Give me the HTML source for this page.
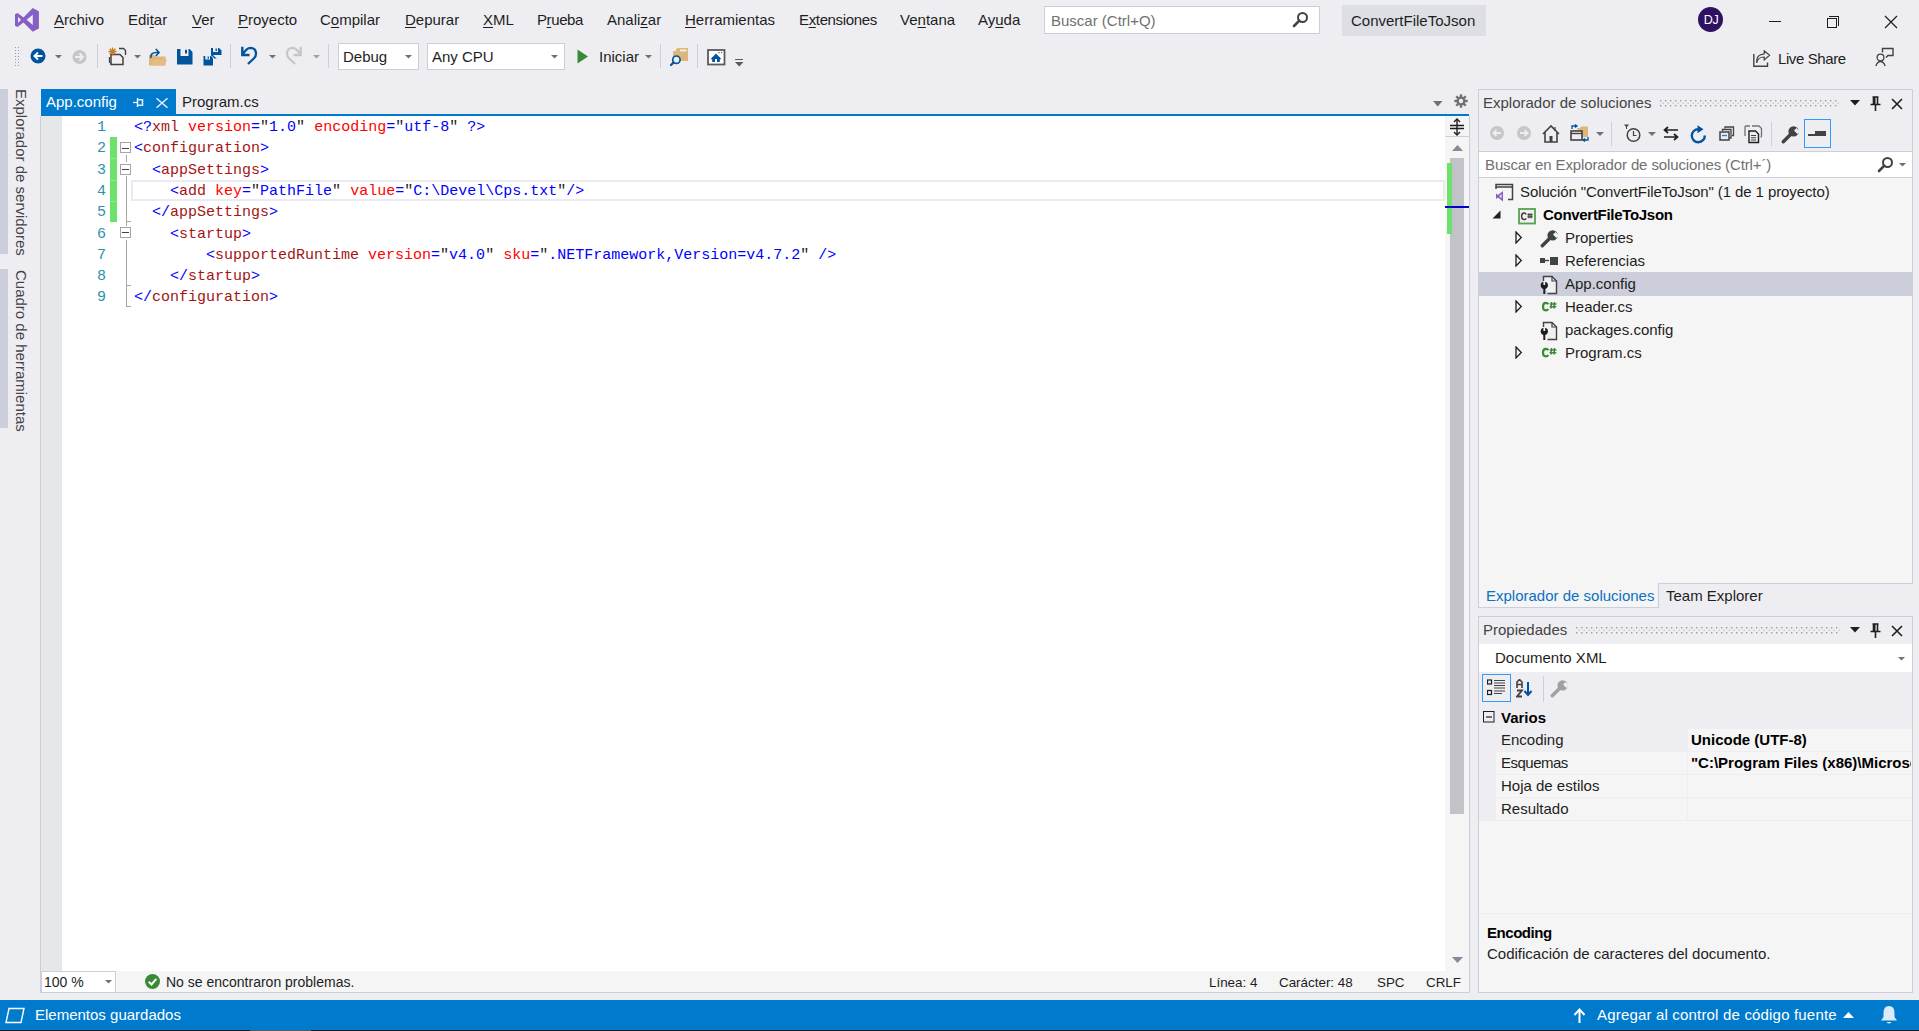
<!DOCTYPE html>
<html><head><meta charset="utf-8">
<style>
*{margin:0;padding:0;box-sizing:border-box}
html,body{width:1919px;height:1031px;overflow:hidden;background:#EEEEF2;font-family:"Liberation Sans",sans-serif;color:#1E1E1E}
.a{position:absolute}
.t{position:absolute;white-space:pre;font-size:15px;line-height:18px}
.u{text-decoration:underline;text-underline-offset:2px}
.sep{position:absolute;width:1px;background:#CCCEDB}
.code{position:absolute;font-family:"Liberation Mono",monospace;font-size:15px;white-space:pre;line-height:21px}
.ln{position:absolute;font-family:"Liberation Mono",monospace;font-size:15px;color:#2B91AF;width:30px;text-align:right;left:76px;line-height:21px}
.d{color:#0000FF}.n{color:#A31515}.at{color:#FF0000}.v{color:#0000FF}
</style></head><body>

<!-- ===== MENU BAR ===== -->
<svg class="a" style="left:0;top:0" width="48" height="36" viewBox="0 0 48 36"><path fill="#865FC5" fill-rule="evenodd" d="M32.7 8 L38.9 11.3 V28.5 L32.7 31.8 L23.5 22.6 L17.6 27 L15 25.7 V14.2 L17.6 13 L23.5 17.4 Z M32.8 14.7 V25.1 L26.6 19.8 Z M18.1 16.7 V23.1 L21 19.8 Z"/></svg>
<div class="t" style="left:54px;top:11px"><span class="u">A</span>rchivo</div>
<div class="t" style="left:128px;top:11px">Edi<span class="u">t</span>ar</div>
<div class="t" style="left:192px;top:11px"><span class="u">V</span>er</div>
<div class="t" style="left:238px;top:11px"><span class="u">P</span>royecto</div>
<div class="t" style="left:320px;top:11px">C<span class="u">o</span>mpilar</div>
<div class="t" style="left:405px;top:11px"><span class="u">D</span>epurar</div>
<div class="t" style="left:483px;top:11px"><span class="u">X</span>ML</div>
<div class="t" style="left:537px;top:11px;letter-spacing:-0.4px">P<span class="u">r</span>ueba</div>
<div class="t" style="left:607px;top:11px">Anali<span class="u">z</span>ar</div>
<div class="t" style="left:685px;top:11px"><span class="u">H</span>erramientas</div>
<div class="t" style="left:799px;top:11px;letter-spacing:-0.35px">E<span class="u">x</span>tensiones</div>
<div class="t" style="left:900px;top:11px">Ve<span class="u">n</span>tana</div>
<div class="t" style="left:978px;top:11px">Ay<span class="u">u</span>da</div>

<!-- search box -->
<div class="a" style="left:1044px;top:6px;width:276px;height:28px;background:#fff;border:1px solid #CCCEDB"></div>
<div class="t" style="left:1051px;top:12px;color:#717171">Buscar (Ctrl+Q)</div>
<svg class="a" style="left:1292px;top:11px" width="17" height="17" viewBox="0 0 17 17"><circle cx="10.5" cy="6.5" r="4.5" fill="none" stroke="#424242" stroke-width="2"/><path d="M7.3 9.7 L2 15" stroke="#424242" stroke-width="2.6" stroke-linecap="round"/></svg>
<div class="a" style="left:1342px;top:5px;width:144px;height:31px;background:#DDDFE4"></div>
<div class="t" style="left:1351px;top:12px">ConvertFileToJson</div>
<!-- user -->
<div class="a" style="left:1698px;top:7px;width:25px;height:25px;border-radius:50%;background:#2E1160"></div>
<div class="t" style="left:1701px;top:12px;width:20px;text-align:center;color:#fff;font-size:12.5px;line-height:17px;letter-spacing:-0.3px">DJ</div>
<!-- window buttons -->
<div class="a" style="left:1769px;top:21px;width:12px;height:1px;background:#1E1E1E"></div>
<div class="a" style="left:1827px;top:18px;width:10px;height:10px;border:1px solid #1E1E1E"></div>
<div class="a" style="left:1829px;top:16px;width:10px;height:10px;border-top:1px solid #1E1E1E;border-right:1px solid #1E1E1E"></div>
<svg class="a" style="left:1884px;top:15px" width="14" height="14" viewBox="0 0 14 14"><path d="M1 1 L13 13 M13 1 L1 13" stroke="#1E1E1E" stroke-width="1.2"/></svg>

<!-- ===== TOOLBAR ===== -->
<div class="a" style="left:14px;top:46px;width:6px;height:22px;background-image:radial-gradient(#999 0.8px,transparent 0.9px);background-size:3px 3px"></div>
<svg class="a" style="left:30px;top:48px" width="17" height="17" viewBox="0 0 17 17"><circle cx="8" cy="8" r="7.5" fill="#00539C"/><path d="M12.5 8 H5 M8 4.5 L4.5 8 L8 11.5" stroke="#fff" stroke-width="2" fill="none"/></svg>
<svg class="a" style="left:55px;top:55px" width="8" height="4"><path d="M0 0 H7 L3.5 3.5Z" fill="#717171"/></svg>
<svg class="a" style="left:71px;top:49px" width="17" height="17" viewBox="0 0 17 17"><circle cx="8.5" cy="8" r="7" fill="#C6C6C6"/><path d="M4 8 H11.5 M8.5 4.5 L12 8 L8.5 11.5" stroke="#EEEEF2" stroke-width="2" fill="none"/></svg>
<div class="sep" style="left:97px;top:44px;height:24px"></div>
<svg class="a" style="left:107px;top:46px" width="20" height="20" viewBox="0 0 20 20"><path d="M12 2.5 H16.5 L18.5 4.5 V9" fill="none" stroke="#424242" stroke-width="1.4"/><path d="M4 8.5 H13 L16 11.5 V18.5 H4Z" fill="#F0EFF1" stroke="#424242" stroke-width="1.5"/><path d="M2.5 11 V16 L4 17.5" fill="none" stroke="#424242" stroke-width="1.3"/><g stroke="#C27D1A" stroke-width="1.3"><path d="M5.5 1.5 V9.5 M1.5 5.5 H9.5 M2.7 2.7 L8.3 8.3 M8.3 2.7 L2.7 8.3"/></g></svg>
<svg class="a" style="left:134px;top:55px" width="8" height="4"><path d="M0 0 H7 L3.5 3.5Z" fill="#717171"/></svg>
<svg class="a" style="left:148px;top:47px" width="20" height="20" viewBox="0 0 20 20"><path d="M1 8 H6 L7.5 9.5 H17.5 V18.5 H1Z" fill="#DCB67A"/><path d="M2.5 18.5 L5 12.5 H19 L16.5 18.5Z" fill="#E2BE83"/><path d="M3 11 Q2 5.5 8.5 5.5 H10.5" fill="none" stroke="#00539C" stroke-width="1.7"/><path d="M7.8 2 L11 5.5 L7.8 9" fill="none" stroke="#00539C" stroke-width="1.7"/></svg>
<svg class="a" style="left:177px;top:49px" width="16" height="16" viewBox="0 0 16 16"><path d="M0 0 H12.5 L15.5 3 V15.5 H0Z" fill="#00539C"/><rect x="3.5" y="0" width="8" height="7" fill="#EEEEF2"/><rect x="8" y="0.8" width="2" height="3.7" fill="#00539C"/></svg>
<svg class="a" style="left:203px;top:47px" width="19" height="19" viewBox="0 0 19 19"><path d="M8 1 H16 L18.5 3.5 V11.5 H8Z" fill="#00539C"/><rect x="10" y="1" width="5" height="4" fill="#EEEEF2"/><rect x="12.5" y="1.5" width="1.4" height="2.5" fill="#00539C"/><path d="M10 8 H19 V13 H15" fill="#EEEEF2"/><path d="M0 8.5 H8 L10.5 11 V19 H0Z" fill="#00539C" stroke="#EEEEF2" stroke-width="1"/><rect x="2.3" y="9" width="4.7" height="3.5" fill="#EEEEF2"/><rect x="4.6" y="9.5" width="1.3" height="2.3" fill="#00539C"/></svg>
<div class="sep" style="left:230px;top:44px;height:24px"></div>
<svg class="a" style="left:240px;top:46px" width="18" height="19" viewBox="0 0 18 19"><path d="M2.3 0.8 V9 H9.5" fill="none" stroke="#00539C" stroke-width="2.4"/><path d="M3 8 Q6.5 1.8 10.5 1.8 Q16 2 16 7.8 Q16 10.3 14 12.3 L8 18" fill="none" stroke="#00539C" stroke-width="2.3"/></svg>
<svg class="a" style="left:269px;top:55px" width="8" height="4"><path d="M0 0 H7 L3.5 3.5Z" fill="#717171"/></svg>
<svg class="a" style="left:285px;top:46px" width="18" height="19" viewBox="0 0 18 19"><g transform="translate(18,0) scale(-1,1)"><path d="M2.3 0.8 V9 H9.5" fill="none" stroke="#C6C6C6" stroke-width="2.3"/><path d="M3 8 Q6.5 1.8 10.5 1.8 Q16 2 16 7.8 Q16 10.3 14 12.3 L8 18" fill="none" stroke="#C6C6C6" stroke-width="2.2"/></g></svg>
<svg class="a" style="left:313px;top:55px" width="8" height="4"><path d="M0 0 H7 L3.5 3.5Z" fill="#A0A0A0"/></svg>
<div class="sep" style="left:328px;top:44px;height:24px"></div>
<!-- combos -->
<div class="a" style="left:338px;top:43px;width:81px;height:27px;background:#fff;border:1px solid #CCCEDB"></div>
<div class="t" style="left:343px;top:48px">Debug</div>
<svg class="a" style="left:405px;top:55px" width="8" height="4"><path d="M0 0 H7 L3.5 3.5Z" fill="#717171"/></svg>
<div class="a" style="left:427px;top:43px;width:138px;height:27px;background:#fff;border:1px solid #CCCEDB"></div>
<div class="t" style="left:432px;top:48px">Any CPU</div>
<svg class="a" style="left:551px;top:55px" width="8" height="4"><path d="M0 0 H7 L3.5 3.5Z" fill="#717171"/></svg>
<svg class="a" style="left:577px;top:49px" width="12" height="15"><path d="M0.5 0.5 L11 7.5 L0.5 14.5Z" fill="#388A34"/></svg>
<div class="t" style="left:599px;top:48px">Iniciar</div>
<svg class="a" style="left:645px;top:55px" width="8" height="4"><path d="M0 0 H7 L3.5 3.5Z" fill="#717171"/></svg>
<div class="sep" style="left:660px;top:44px;height:24px"></div>
<svg class="a" style="left:660px;top:42px" width="40" height="30" viewBox="0 0 40 30"><path d="M13 9 H15.5 L17 6 H28 V19 H13Z" fill="#DCB67A"/><rect x="20" y="7.5" width="6.5" height="2" fill="#EEF0F0"/><circle cx="16.4" cy="17.7" r="3.7" fill="#EEEEF2" stroke="#00539C" stroke-width="1.7"/><path d="M13.7 20.4 L11 23" stroke="#00539C" stroke-width="2.2" stroke-linecap="round"/></svg>
<div class="sep" style="left:697px;top:44px;height:24px"></div>
<svg class="a" style="left:700px;top:42px" width="40" height="30" viewBox="0 0 40 30"><rect x="8" y="8" width="16.5" height="14.5" fill="#fff" stroke="#5A5A5A" stroke-width="1.8"/><path d="M10.5 17.2 L16 11.5 L21.5 17.2 Z" fill="#00539C"/><rect x="12.2" y="15" width="7.6" height="5" fill="#00539C"/><rect x="15" y="17" width="2" height="3" fill="#fff"/><rect x="18.5" y="10" width="1.2" height="1.2" fill="#5A5A5A"/><rect x="21" y="10" width="1.2" height="1.2" fill="#5A5A5A"/></svg>
<div class="a" style="left:735px;top:59px;width:8px;height:1px;background:#5A5A5A"></div>
<svg class="a" style="left:735px;top:62px" width="9" height="5"><path d="M0 0 H8.5 L4.25 4.5Z" fill="#5A5A5A"/></svg>
<!-- live share -->
<svg class="a" style="left:1752px;top:50px" width="19" height="18" viewBox="0 0 19 18"><path d="M1.8 4 V16.2 H15.5 V12.5" fill="none" stroke="#424242" stroke-width="1.4"/><path d="M4.8 13 Q5.5 7 12.2 7 V10 L17.6 5.2 L12.2 0.8 V3.8 Q3.8 4.5 4.8 13Z" fill="none" stroke="#424242" stroke-width="1.2"/></svg>
<div class="t" style="left:1778px;top:50px;letter-spacing:-0.4px">Live Share</div>
<svg class="a" style="left:1875px;top:47px" width="20" height="21" viewBox="0 0 20 21"><circle cx="5.5" cy="10.5" r="3.4" fill="none" stroke="#424242" stroke-width="1.3"/><path d="M0.8 19 Q2.5 14.5 5.5 14.5 Q8.5 14.5 10.2 19" fill="none" stroke="#424242" stroke-width="1.3"/><path d="M7.5 5.5 V1.5 H18 V8.5 H13 L11 10.5" fill="none" stroke="#424242" stroke-width="1.4"/></svg>

<!-- ===== LEFT VERTICAL TABS ===== -->
<div class="a" style="left:0;top:89px;width:8px;height:165px;background:#CCCEDB"></div>
<div class="a" style="left:0;top:269px;width:8px;height:159px;background:#CCCEDB"></div>
<div class="t" style="left:12px;top:89px;writing-mode:vertical-rl;color:#444">Explorador de servidores</div>
<div class="t" style="left:12px;top:270px;writing-mode:vertical-rl;color:#444">Cuadro de herramientas</div>

<!-- ===== DOCUMENT TABS ===== -->
<div class="a" style="left:41px;top:89px;width:135px;height:27px;background:#007ACC"></div>
<div class="t" style="left:46px;top:93px;color:#fff">App.config</div>
<svg class="a" style="left:133px;top:98px" width="11" height="10" viewBox="0 0 11 10"><path d="M0 4.5 H4" stroke="#fff" stroke-width="1.2"/><path d="M4.5 0 V9" stroke="#fff" stroke-width="1.4"/><path d="M4.5 1.8 H9.5 V7.2 H4.5" fill="none" stroke="#DDEBF7" stroke-width="1.6"/></svg>
<svg class="a" style="left:156px;top:98px" width="12" height="10" viewBox="0 0 12 10"><path d="M0.5 0.3 L11.5 9.7 M11.5 0.3 L0.5 9.7" stroke="#E6F0FA" stroke-width="1.5"/></svg>
<div class="t" style="left:182px;top:93px">Program.cs</div>
<div class="a" style="left:41px;top:114px;width:1428px;height:2px;background:#007ACC"></div>
<svg class="a" style="left:1433px;top:101px" width="10" height="6"><path d="M0 0 H9.5 L4.75 5.5Z" fill="#717171"/></svg>
<svg class="a" style="left:1454px;top:94px" width="14" height="14" viewBox="0 0 14 14"><g fill="#717171"><circle cx="7" cy="7" r="4.6"/><rect x="5.8" y="0.3" width="2.4" height="13.4"/><rect x="0.3" y="5.8" width="13.4" height="2.4"/><rect x="5.8" y="0.3" width="2.4" height="13.4" transform="rotate(45 7 7)"/><rect x="5.8" y="0.3" width="2.4" height="13.4" transform="rotate(-45 7 7)"/></g><circle cx="7" cy="7" r="2.2" fill="#EEEEF2"/></svg>

<!-- ===== EDITOR ===== -->
<div class="a" style="left:40px;top:116px;width:1430px;height:877px;border:1px solid #CCCEDB;border-top:none;background:#fff"></div>
<div class="a" style="left:41px;top:116px;width:21px;height:855px;background:#E6E7E8"></div>
<!-- current line -->
<div class="a" style="left:131px;top:180px;width:1314px;height:21px;border:2px solid #EAEAF2"></div>
<!-- green change bar -->
<div class="a" style="left:110px;top:137px;width:7px;height:85px;background:#6CE26C"></div>
<div class="a" style="left:110px;top:158px;width:7px;height:1px;background:#8CE88C"></div>
<div class="a" style="left:110px;top:180px;width:7px;height:1px;background:#8CE88C"></div>
<div class="a" style="left:110px;top:201px;width:7px;height:1px;background:#8CE88C"></div>
<!-- fold markers -->
<div class="a" style="left:126px;top:155px;width:1px;height:7px;background:#A5A5A5"></div>
<div class="a" style="left:126px;top:176px;width:1px;height:50px;background:#A5A5A5"></div>
<div class="a" style="left:126px;top:221px;width:5px;height:1px;background:#A5A5A5"></div>
<div class="a" style="left:126px;top:240px;width:1px;height:67px;background:#A5A5A5"></div>
<div class="a" style="left:126px;top:285px;width:5px;height:1px;background:#A5A5A5"></div>
<div class="a" style="left:126px;top:306px;width:5px;height:1px;background:#A5A5A5"></div>
<div class="a" style="left:120px;top:142px;width:11px;height:11px;border:1px solid #A5A5A5;background:#fff"></div>
<div class="a" style="left:122px;top:148px;width:7px;height:1px;background:#424242"></div>
<div class="a" style="left:120px;top:164px;width:11px;height:11px;border:1px solid #A5A5A5;background:#fff"></div>
<div class="a" style="left:122px;top:169px;width:7px;height:1px;background:#424242"></div>
<div class="a" style="left:120px;top:227px;width:11px;height:11px;border:1px solid #A5A5A5;background:#fff"></div>
<div class="a" style="left:122px;top:232px;width:7px;height:1px;background:#424242"></div>

<div class="ln" style="top:117px">1</div>
<div class="ln" style="top:138.3px">2</div>
<div class="ln" style="top:159.6px">3</div>
<div class="ln" style="top:180.9px">4</div>
<div class="ln" style="top:202.2px">5</div>
<div class="ln" style="top:223.5px">6</div>
<div class="ln" style="top:244.8px">7</div>
<div class="ln" style="top:266.1px">8</div>
<div class="ln" style="top:287.4px">9</div>

<div class="code" style="left:134px;top:117px"><span class="d">&lt;?</span><span class="n">xml</span> <span class="at">version</span><span class="d">=</span>"<span class="v">1.0</span>" <span class="at">encoding</span><span class="d">=</span>"<span class="v">utf-8</span>" <span class="d">?&gt;</span></div>
<div class="code" style="left:134px;top:138.3px"><span class="d">&lt;</span><span class="n">configuration</span><span class="d">&gt;</span></div>
<div class="code" style="left:152px;top:159.6px"><span class="d">&lt;</span><span class="n">appSettings</span><span class="d">&gt;</span></div>
<div class="code" style="left:170px;top:180.9px"><span class="d">&lt;</span><span class="n">add</span> <span class="at">key</span><span class="d">=</span>"<span class="v">PathFile</span>" <span class="at">value</span><span class="d">=</span>"<span class="v">C:\Devel\Cps.txt</span>"<span class="d">/&gt;</span></div>
<div class="code" style="left:152px;top:202.2px"><span class="d">&lt;/</span><span class="n">appSettings</span><span class="d">&gt;</span></div>
<div class="code" style="left:170px;top:223.5px"><span class="d">&lt;</span><span class="n">startup</span><span class="d">&gt;</span></div>
<div class="code" style="left:206px;top:244.8px"><span class="d">&lt;</span><span class="n">supportedRuntime</span> <span class="at">version</span><span class="d">=</span>"<span class="v">v4.0</span>" <span class="at">sku</span><span class="d">=</span>"<span class="v">.NETFramework,Version=v4.7.2</span>" <span class="d">/&gt;</span></div>
<div class="code" style="left:170px;top:266.1px"><span class="d">&lt;/</span><span class="n">startup</span><span class="d">&gt;</span></div>
<div class="code" style="left:134px;top:287.4px"><span class="d">&lt;/</span><span class="n">configuration</span><span class="d">&gt;</span></div>

<!-- editor scrollbar -->
<div class="a" style="left:1445px;top:116px;width:24px;height:855px;background:#F5F5F5"></div>
<div class="a" style="left:1445px;top:116px;width:24px;height:21px;background:#F5F5F5;border-bottom:1px solid #CCCEDB;border-left:1px solid #F0F0F0"></div>
<svg class="a" style="left:1449px;top:118px" width="16" height="18" viewBox="0 0 16 18"><path d="M1 7.5 H15 M1 10.5 H15" stroke="#1E1E1E" stroke-width="1.4"/><path d="M8 2 V16" stroke="#1E1E1E" stroke-width="1.4"/><path d="M5 4 L8 1 L11 4 M5 14 L8 17 L11 14" fill="none" stroke="#1E1E1E" stroke-width="1.4"/></svg>
<svg class="a" style="left:1452px;top:145px" width="11" height="6"><path d="M0 6 H11 L5.5 0Z" fill="#868999"/></svg>
<div class="a" style="left:1450px;top:158px;width:14px;height:656px;background:#C2C3C9"></div>
<div class="a" style="left:1447px;top:163px;width:5px;height:71px;background:#6CE26C"></div>
<div class="a" style="left:1445px;top:206px;width:24px;height:2px;background:#0000CD"></div>
<svg class="a" style="left:1452px;top:957px" width="11" height="6"><path d="M0 0 H11 L5.5 6Z" fill="#868999"/></svg>

<!-- editor bottom bar -->
<div class="a" style="left:41px;top:971px;width:1428px;height:21px;background:#F5F5F5"></div>
<div class="a" style="left:41px;top:971px;width:75px;height:22px;background:#fff;border:1px solid #CCCEDB"></div>
<div class="t" style="left:44px;top:973px;font-size:14px">100 %</div>
<svg class="a" style="left:105px;top:980px" width="7" height="4"><path d="M0 0 H7 L3.5 3.5Z" fill="#717171"/></svg>
<svg class="a" style="left:145px;top:974px" width="15" height="15" viewBox="0 0 15 15"><circle cx="7.5" cy="7.5" r="7.5" fill="#388A34"/><path d="M3.8 7.8 L6.5 10.5 L11.3 4.8" fill="none" stroke="#fff" stroke-width="2"/></svg>
<div class="t" style="left:166px;top:973px;font-size:14px">No se encontraron problemas.</div>
<div class="t" style="left:1209px;top:973px;font-size:13.4px;top:974px">Línea: 4</div>
<div class="t" style="left:1279px;top:973px;font-size:13.4px;top:974px">Carácter: 48</div>
<div class="t" style="left:1377px;top:973px;font-size:13.4px;top:974px">SPC</div>
<div class="t" style="left:1426px;top:973px;font-size:13.4px;top:974px">CRLF</div>

<!-- ===== STATUS BAR ===== -->
<div class="a" style="left:0;top:1000px;width:1919px;height:31px;background:#007ACC"></div>
<div class="a" style="left:0;top:1030px;width:1919px;height:1px;background:#201A1C"></div>
<div class="a" style="left:250px;top:1030px;width:61px;height:1px;background:#5A5A5E"></div>
<svg class="a" style="left:4px;top:1007px" width="22" height="17" viewBox="0 0 22 17"><path d="M5 1.5 H20 L17 15.5 H2Z" fill="none" stroke="#fff" stroke-width="1.4"/></svg>
<div class="t" style="left:35px;top:1006px;color:#fff">Elementos guardados</div>
<svg class="a" style="left:1573px;top:1008px" width="13" height="15" viewBox="0 0 13 15"><path d="M6.5 15 V2 M1.5 7 L6.5 1.5 L11.5 7" fill="none" stroke="#fff" stroke-width="2"/></svg>
<div class="t" style="left:1597px;top:1006px;color:#fff;letter-spacing:0.18px">Agregar al control de código fuente</div>
<svg class="a" style="left:1843px;top:1012px" width="11" height="6"><path d="M0 6 H11 L5.5 0Z" fill="#fff"/></svg>
<svg class="a" style="left:1880px;top:1005px" width="18" height="20" viewBox="0 0 18 20"><path d="M9 1 Q3.5 1 3.5 8 V12 L1 15.5 H17 L14.5 12 V8 Q14.5 1 9 1Z M6.5 17 Q9 20 11.5 17Z" fill="#fff" fill-opacity="0.85"/></svg>

<!-- ===== SOLUTION EXPLORER ===== -->
<div class="a" style="left:1478px;top:89px;width:435px;height:495px;border:1px solid #CCCEDB;background:#F5F5F5"></div>
<div class="a" style="left:1479px;top:90px;width:433px;height:61px;background:#EEEEF2"></div>
<div class="t" style="left:1483px;top:94px;color:#444">Explorador de soluciones</div>
<svg class="a" style="left:1660px;top:100px" width="180" height="7"><defs><pattern id="g100" width="5" height="5" patternUnits="userSpaceOnUse"><rect x="0" y="0" width="1.4" height="1.4" fill="#9A9AA0"/><rect x="2.5" y="2.5" width="1.4" height="1.4" fill="#C4C4CA"/></pattern></defs><rect width="180" height="7" fill="url(#g100)"/></svg>
<svg class="a" style="left:1850px;top:100px" width="10" height="6"><path d="M0 0 H10 L5 5.5Z" fill="#1E1E1E"/></svg>
<svg class="a" style="left:1870px;top:96px" width="11" height="15" viewBox="0 0 11 15"><path d="M2.5 1 H8.5 M3.5 1 V8 M7.5 1 V8 M0.5 8.5 H10.5 M5.5 9 V15" fill="none" stroke="#1E1E1E" stroke-width="1.6"/><rect x="3.5" y="1" width="2" height="7" fill="#1E1E1E"/></svg>
<svg class="a" style="left:1891px;top:98px" width="12" height="12" viewBox="0 0 12 12"><path d="M1 1 L11 11 M11 1 L1 11" stroke="#1E1E1E" stroke-width="1.6"/></svg>
<!-- SE toolbar -->
<svg class="a" style="left:1489px;top:125px" width="16" height="16" viewBox="0 0 16 16"><circle cx="8" cy="8" r="7" fill="#C6C6C6"/><path d="M12 8 H4.5 M7.5 4.8 L4.3 8 L7.5 11.2" stroke="#EEEEF2" stroke-width="1.8" fill="none"/></svg>
<svg class="a" style="left:1516px;top:125px" width="16" height="16" viewBox="0 0 16 16"><circle cx="8" cy="8" r="7" fill="#C6C6C6"/><path d="M4 8 H11.5 M8.5 4.8 L11.7 8 L8.5 11.2" stroke="#EEEEF2" stroke-width="1.8" fill="none"/></svg>
<svg class="a" style="left:1542px;top:124px" width="18" height="19" viewBox="0 0 18 19"><path d="M1 10 L9 2 L17 10 M3 8.5 V18 H15 V8.5" fill="none" stroke="#424242" stroke-width="1.6"/><rect x="7.5" y="12" width="3" height="6" fill="#424242"/><path d="M13 3 V7" stroke="#424242" stroke-width="1.2"/></svg>
<svg class="a" style="left:1570px;top:124px" width="19" height="18" viewBox="0 0 19 18"><path d="M7 4 H10 L11 2.5 H18 V13 H10Z" fill="#DCB67A"/><rect x="1" y="7" width="11" height="9" fill="#EEEEF2" stroke="#424242" stroke-width="1.6"/><path d="M1 9.5 H12" stroke="#424242" stroke-width="1.4"/><path d="M2 5 V2 H6 M5 0.5 L7 2 L5 3.5" fill="none" stroke="#00539C" stroke-width="1.3"/><path d="M18 13 V16 H14 M15 14.5 L13 16 L15 17.5" fill="none" stroke="#00539C" stroke-width="1.3"/></svg>
<svg class="a" style="left:1596px;top:132px" width="8" height="4"><path d="M0 0 H8 L4 4Z" fill="#717171"/></svg>
<div class="sep" style="left:1611px;top:122px;height:24px"></div>
<svg class="a" style="left:1623px;top:124px" width="20" height="19" viewBox="0 0 20 19"><path d="M1 0.5 H6 L3.5 3.5Z" fill="#424242"/><path d="M3.5 3 V5" stroke="#424242"/><circle cx="10.5" cy="11" r="6.3" fill="none" stroke="#424242" stroke-width="1.5"/><path d="M10.5 7 V11.5 H13.5" fill="none" stroke="#424242" stroke-width="1.2"/></svg>
<svg class="a" style="left:1648px;top:132px" width="8" height="4"><path d="M0 0 H8 L4 4Z" fill="#717171"/></svg>
<svg class="a" style="left:1663px;top:126px" width="16" height="15" viewBox="0 0 16 15"><path d="M15 4 H2 M5 1 L1.5 4 L5 7 M1 11 H14 M11 8 L14.5 11 L11 14" fill="none" stroke="#1E1E1E" stroke-width="1.7"/></svg>
<svg class="a" style="left:1690px;top:125px" width="18" height="19" viewBox="0 0 18 19"><path d="M14.8 10.5 A6.5 6.5 0 1 1 8.5 4.2" fill="none" stroke="#00539C" stroke-width="2.4"/><path d="M7.5 0.3 L13.5 4.3 L7.5 8.3Z" fill="#00539C"/></svg>
<svg class="a" style="left:1719px;top:126px" width="16" height="15" viewBox="0 0 16 15"><path d="M6 2.5 V1 H14.5 V9.5 H13" fill="none" stroke="#424242" stroke-width="1.3"/><path d="M3.5 5 V3.5 H12 V12 H10.5" fill="none" stroke="#424242" stroke-width="1.3"/><rect x="1" y="6" width="9" height="8" fill="#EEEEF2" stroke="#424242" stroke-width="1.5"/><path d="M3 9.5 H8" stroke="#3A7BC8" stroke-width="1.4"/></svg>
<svg class="a" style="left:1744px;top:125px" width="19" height="19" viewBox="0 0 19 19"><path d="M1 11 V2 Q1 1 2 1 H6 M8 1 H15 L17.5 3.5 V11 Q17.5 12 16.5 12" fill="none" stroke="#717171" stroke-width="1.3"/><path d="M5 6 H11.5 L14.5 9 V17.5 H5Z" fill="#EEEEF2" stroke="#1E1E1E" stroke-width="1.4"/><path d="M7 10.5 H12 M7 12.8 H12 M7 15 H12" stroke="#424242" stroke-width="1.1"/></svg>
<div class="sep" style="left:1771px;top:122px;height:24px"></div>
<svg class="a" style="left:1781px;top:125px" width="19" height="19" viewBox="0 0 19 19"><path d="M12 7 L2.3 16.7" stroke="#424242" stroke-width="3.4" stroke-linecap="round"/><circle cx="12.6" cy="6.4" r="5.2" fill="#424242"/><path d="M13 5.6 L15.6 3 L19 6.4 L16.4 9Z" fill="#EEEEF2"/></svg>
<div class="a" style="left:1804px;top:119px;width:27px;height:29px;border:1px solid #3399FF;background:#EEEEF2"></div>
<div class="a" style="left:1808px;top:134px;width:8px;height:2px;background:#424242"></div>
<div class="a" style="left:1815px;top:131px;width:11px;height:5px;background:#424242"></div>
<!-- SE search -->
<div class="a" style="left:1479px;top:151px;width:433px;height:27px;background:#fff;border-top:1px solid #CCCEDB;border-bottom:1px solid #CCCEDB"></div>
<div class="t" style="left:1485px;top:156px;color:#717171;letter-spacing:-0.12px">Buscar en Explorador de soluciones (Ctrl+´)</div>
<svg class="a" style="left:1877px;top:156px" width="17" height="17" viewBox="0 0 17 17"><circle cx="10.5" cy="6.5" r="4.5" fill="none" stroke="#424242" stroke-width="2"/><path d="M7.3 9.7 L2 15" stroke="#424242" stroke-width="2.6" stroke-linecap="round"/></svg>
<svg class="a" style="left:1899px;top:163px" width="7" height="4"><path d="M0 0 H7 L3.5 3.5Z" fill="#717171"/></svg>

<!-- tree -->
<div class="a" style="left:1479px;top:272px;width:433px;height:24px;background:#CCCEDB"></div>
<svg class="a" style="left:1494px;top:183px" width="20" height="19" viewBox="0 0 20 19"><path d="M2 6 V1.5 H18.5 V16.5 H14" fill="none" stroke="#424242" stroke-width="1.5"/><path d="M2 4 H18.5" stroke="#424242" stroke-width="1.5"/><path d="M9 8 L4 12 L2 10.5 V16 L4 14.5 L9 18.5 V8Z M7.5 11 L5.3 13.2 L7.5 15.5Z" fill="#865FC5" fill-rule="evenodd"/></svg>
<div class="t" style="left:1520px;top:183px;letter-spacing:-0.1px">Solución "ConvertFileToJson" (1 de 1 proyecto)</div>
<svg class="a" style="left:1492px;top:210px" width="9" height="9"><path d="M8.5 0.5 V8.5 H0.5Z" fill="#1E1E1E"/></svg>
<svg class="a" style="left:1517px;top:207px" width="20" height="18" viewBox="0 0 20 18"><rect x="2" y="2" width="16" height="14.5" fill="#F0EFF1" stroke="#57A150" stroke-width="1.8"/><path d="M9.2 7.4 Q8.5 6 7.1 6 Q4.6 6 4.6 9.3 Q4.6 12.6 7.1 12.6 Q8.5 12.6 9.2 11.3" fill="none" stroke="#424242" stroke-width="1.5"/><path d="M11.9 6.2 V11.2 M14.1 6.2 V11.2 M10.4 7.7 H15.6 M10.4 9.8 H15.6" stroke="#424242" stroke-width="1.2"/></svg>
<div class="t" style="left:1543px;top:206px;font-weight:bold;color:#000;letter-spacing:-0.3px">ConvertFileToJson</div>
<svg class="a" style="left:1515px;top:231px" width="8" height="13" viewBox="0 0 8 13"><path d="M1 1 L6.3 6.5 L1 12Z" fill="none" stroke="#1E1E1E" stroke-width="1.3"/></svg>
<svg class="a" style="left:1540px;top:229px" width="19" height="19" viewBox="0 0 19 19"><path d="M12 7 L2.3 16.7" stroke="#424242" stroke-width="3.4" stroke-linecap="round"/><circle cx="12.6" cy="6.4" r="5.2" fill="#424242"/><path d="M13 5.6 L15.6 3 L19 6.4 L16.4 9Z" fill="#F5F5F5"/></svg>
<div class="t" style="left:1565px;top:229px">Properties</div>
<svg class="a" style="left:1515px;top:254px" width="8" height="13" viewBox="0 0 8 13"><path d="M1 1 L6.3 6.5 L1 12Z" fill="none" stroke="#1E1E1E" stroke-width="1.3"/></svg>
<svg class="a" style="left:1540px;top:252px" width="19" height="18" viewBox="0 0 19 18"><rect x="0" y="6" width="5" height="5" fill="#424242"/><path d="M5 8.5 H9" stroke="#424242" stroke-width="1.4"/><rect x="10" y="5" width="8" height="8" fill="#424242"/></svg>
<div class="t" style="left:1565px;top:252px">Referencias</div>
<svg class="a" style="left:1540px;top:275px" width="19" height="20" viewBox="0 0 19 20"><path d="M3.5 6 V1.5 H12 L16.5 6 V18.5 H7.5" fill="#F0EFF1" stroke="#424242" stroke-width="1.4"/><path d="M12 1.5 V6 H16.5" fill="none" stroke="#424242" stroke-width="1.2"/><circle cx="4.3" cy="10.3" r="3.6" fill="#1E1E1E"/><rect x="3.4" y="6" width="1.8" height="4" fill="#F0EFF1"/><rect x="3.3" y="12" width="2" height="7" fill="#1E1E1E"/></svg>
<div class="t" style="left:1565px;top:275px">App.config</div>
<svg class="a" style="left:1515px;top:300px" width="8" height="13" viewBox="0 0 8 13"><path d="M1 1 L6.3 6.5 L1 12Z" fill="none" stroke="#1E1E1E" stroke-width="1.3"/></svg>
<svg class="a" style="left:1540px;top:298px" width="19" height="18" viewBox="0 0 19 18"><path d="M8.3 6.2 Q7.5 4.8 5.8 4.8 Q3 4.8 3 8.6 Q3 12.4 5.8 12.4 Q7.5 12.4 8.3 11" fill="none" stroke="#388A34" stroke-width="2.2"/><path d="M11.5 4 L11 10.5 M14.5 4 L14 10.5 M9.8 6 H16.5 M9.6 8.7 H16.3" stroke="#388A34" stroke-width="1.5"/></svg>
<div class="t" style="left:1565px;top:298px">Header.cs</div>
<svg class="a" style="left:1540px;top:321px" width="19" height="20" viewBox="0 0 19 20"><path d="M3.5 6 V1.5 H12 L16.5 6 V18.5 H7.5" fill="#F0EFF1" stroke="#424242" stroke-width="1.4"/><path d="M12 1.5 V6 H16.5" fill="none" stroke="#424242" stroke-width="1.2"/><circle cx="4.3" cy="10.3" r="3.6" fill="#1E1E1E"/><rect x="3.4" y="6" width="1.8" height="4" fill="#F0EFF1"/><rect x="3.3" y="12" width="2" height="7" fill="#1E1E1E"/></svg>
<div class="t" style="left:1565px;top:321px">packages.config</div>
<svg class="a" style="left:1515px;top:346px" width="8" height="13" viewBox="0 0 8 13"><path d="M1 1 L6.3 6.5 L1 12Z" fill="none" stroke="#1E1E1E" stroke-width="1.3"/></svg>
<svg class="a" style="left:1540px;top:344px" width="19" height="18" viewBox="0 0 19 18"><path d="M8.3 6.2 Q7.5 4.8 5.8 4.8 Q3 4.8 3 8.6 Q3 12.4 5.8 12.4 Q7.5 12.4 8.3 11" fill="none" stroke="#388A34" stroke-width="2.2"/><path d="M11.5 4 L11 10.5 M14.5 4 L14 10.5 M9.8 6 H16.5 M9.6 8.7 H16.3" stroke="#388A34" stroke-width="1.5"/></svg>
<div class="t" style="left:1565px;top:344px">Program.cs</div>

<!-- bottom tabs -->
<div class="a" style="left:1478px;top:583px;width:181px;height:25px;border:1px solid #CCCEDB;border-top:none;background:#F5F5F5"></div>
<div class="t" style="left:1486px;top:587px;color:#0E70C0">Explorador de soluciones</div>
<div class="t" style="left:1666px;top:587px;color:#1E1E1E">Team Explorer</div>

<!-- ===== PROPERTIES ===== -->
<div class="a" style="left:1478px;top:616px;width:435px;height:377px;border:1px solid #CCCEDB;background:#F5F5F5"></div>
<div class="a" style="left:1479px;top:617px;width:433px;height:27px;background:#EEEEF2"></div>
<div class="t" style="left:1483px;top:621px;color:#444">Propiedades</div>
<svg class="a" style="left:1576px;top:627px" width="264" height="7"><defs><pattern id="g627" width="5" height="5" patternUnits="userSpaceOnUse"><rect x="0" y="0" width="1.4" height="1.4" fill="#9A9AA0"/><rect x="2.5" y="2.5" width="1.4" height="1.4" fill="#C4C4CA"/></pattern></defs><rect width="264" height="7" fill="url(#g627)"/></svg>
<svg class="a" style="left:1850px;top:627px" width="10" height="6"><path d="M0 0 H10 L5 5.5Z" fill="#1E1E1E"/></svg>
<svg class="a" style="left:1870px;top:623px" width="11" height="15" viewBox="0 0 11 15"><path d="M2.5 1 H8.5 M3.5 1 V8 M7.5 1 V8 M0.5 8.5 H10.5 M5.5 9 V15" fill="none" stroke="#1E1E1E" stroke-width="1.6"/><rect x="3.5" y="1" width="2" height="7" fill="#1E1E1E"/></svg>
<svg class="a" style="left:1891px;top:625px" width="12" height="12" viewBox="0 0 12 12"><path d="M1 1 L11 11 M11 1 L1 11" stroke="#1E1E1E" stroke-width="1.6"/></svg>
<div class="a" style="left:1479px;top:644px;width:433px;height:28px;background:#fff"></div>
<div class="t" style="left:1495px;top:649px">Documento XML</div>
<svg class="a" style="left:1898px;top:657px" width="7" height="4"><path d="M0 0 H7 L3.5 3.5Z" fill="#717171"/></svg>
<div class="a" style="left:1479px;top:672px;width:433px;height:35px;background:#EEEEF2"></div>
<div class="a" style="left:1482px;top:674px;width:29px;height:28px;border:1px solid #3399FF"></div>
<svg class="a" style="left:1487px;top:679px" width="19" height="18" viewBox="0 0 19 18"><rect x="0.5" y="1" width="4" height="4" fill="none" stroke="#1E1E1E" stroke-width="1.2"/><rect x="0.5" y="11.5" width="4" height="4" fill="none" stroke="#1E1E1E" stroke-width="1.2"/><path d="M7 1.5 H18 M7 4 H18 M7 6.5 H18 M7 9 H18 M7 12 H18 M7 14.5 H15" stroke="#424242" stroke-width="1.1"/></svg>
<svg class="a" style="left:1516px;top:679px" width="18" height="19" viewBox="0 0 18 19"><path d="M1 9 V3 L3.5 0.5 L6 3 V9 M1 5.5 H6" fill="none" stroke="#424242" stroke-width="1.6"/><path d="M1 11.5 H6 L1 17.5 H6" fill="none" stroke="#424242" stroke-width="1.8"/><path d="M12 3 V16 M8.5 12 L12 16 L15.5 12" fill="none" stroke="#00539C" stroke-width="2"/></svg>
<div class="sep" style="left:1543px;top:676px;height:26px"></div>
<svg class="a" style="left:1550px;top:679px" width="19" height="19" viewBox="0 0 19 19"><path d="M12 7 L2.3 16.7" stroke="#A0A0A0" stroke-width="3.4" stroke-linecap="round"/><circle cx="12.6" cy="6.4" r="5.2" fill="#A0A0A0"/><path d="M13 5.6 L15.6 3 L19 6.4 L16.4 9Z" fill="#EEEEF2"/></svg>
<!-- grid -->
<div class="a" style="left:1479px;top:707px;width:433px;height:22px;background:#EEEEF2"></div>
<svg class="a" style="left:1483px;top:711px" width="12" height="12" viewBox="0 0 12 12"><rect x="0.5" y="0.5" width="10.5" height="10.5" fill="none" stroke="#1E1E1E"/><path d="M3 6 H9" stroke="#1E1E1E" stroke-width="1.2"/></svg>
<div class="t" style="left:1501px;top:709px;font-weight:bold;color:#000">Varios</div>
<div class="a" style="left:1479px;top:729px;width:17px;height:92px;background:#EEEEF2"></div>
<div class="a" style="left:1496px;top:729px;width:192px;height:22px;background:#EEEEF2"></div>
<div class="a" style="left:1688px;top:729px;width:223px;height:22px;background:#F5F5F5"></div>
<div class="a" style="left:1496px;top:751px;width:415px;height:70px;background:#F5F5F5"></div>
<div class="a" style="left:1496px;top:751px;width:415px;height:1px;background:#EEEEF2"></div>
<div class="a" style="left:1496px;top:774px;width:415px;height:1px;background:#EEEEF2"></div>
<div class="a" style="left:1496px;top:797px;width:415px;height:1px;background:#EEEEF2"></div>
<div class="a" style="left:1479px;top:820px;width:433px;height:1px;background:#EEEEF2"></div>
<div class="a" style="left:1687px;top:729px;width:1px;height:92px;background:#EEEEF2"></div>
<div class="t" style="left:1501px;top:731px">Encoding</div>
<div class="t" style="left:1691px;top:731px;font-weight:bold;color:#000">Unicode (UTF-8)</div>
<div class="t" style="left:1501px;top:754px;letter-spacing:-0.5px">Esquemas</div>
<div class="a" style="left:1691px;top:754px;width:220px;height:20px;overflow:hidden"><div class="t" style="left:0;top:0;font-weight:bold;color:#000">"C:\Program Files (x86)\Microsoft Visual Studio</div></div>
<div class="t" style="left:1501px;top:777px">Hoja de estilos</div>
<div class="t" style="left:1501px;top:800px">Resultado</div>
<!-- description -->
<div class="a" style="left:1479px;top:913px;width:433px;height:1px;background:#EEEEF2"></div>
<div class="t" style="left:1487px;top:924px;font-weight:bold;color:#000;letter-spacing:-0.45px">Encoding</div>
<div class="t" style="left:1487px;top:945px">Codificación de caracteres del documento.</div>

</body></html>
